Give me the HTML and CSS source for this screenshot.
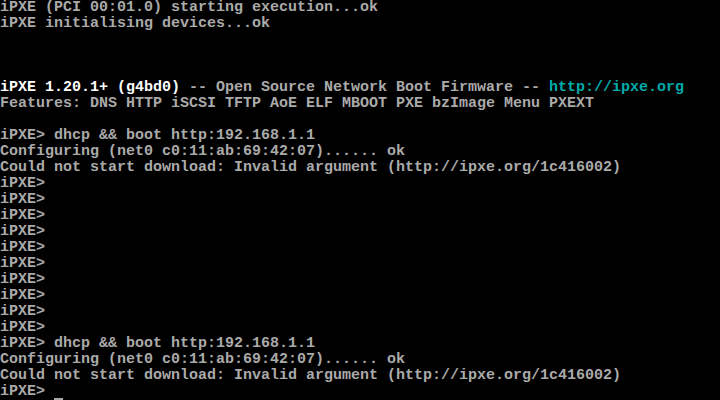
FILE: index.html
```html
<!DOCTYPE html>
<html>
<head>
<meta charset="utf-8">
<link rel="stylesheet" href="styles.css">
</head>
<body>
<pre class="console">iPXE (PCI 00:01.0) starting execution...ok
iPXE initialising devices...ok



<span class="hi">iPXE 1.20.1+ (g4bd0)</span> -- Open Source Network Boot Firmware -- <span class="url">http://ipxe.org</span>
Features: DNS HTTP iSCSI TFTP AoE ELF MBOOT PXE bzImage Menu PXEXT

iPXE&gt; dhcp &amp;&amp; boot http:192.168.1.1
Configuring (net0 c0:11:ab:69:42:07)...... ok
Could not start download: Invalid argument (http://ipxe.org/1c416002)
iPXE&gt;
iPXE&gt;
iPXE&gt;
iPXE&gt;
iPXE&gt;
iPXE&gt;
iPXE&gt;
iPXE&gt;
iPXE&gt;
iPXE&gt;
iPXE&gt; dhcp &amp;&amp; boot http:192.168.1.1
Configuring (net0 c0:11:ab:69:42:07)...... ok
Could not start download: Invalid argument (http://ipxe.org/1c416002)
iPXE&gt; <span class="cursor"> </span></pre>
</body>
</html>
```
FILE: styles.css
```css
html, body {
  margin: 0;
  padding: 0;
  background: #000;
  width: 720px;
  height: 400px;
  overflow: hidden;
}
.console {
  margin: 0;
  padding: 0;
  font-family: "Liberation Mono", "DejaVu Sans Mono", monospace;
  font-size: 15px;
  font-weight: bold;
  line-height: 16px;
  color: #aaaaaa;
  white-space: pre;
}
.hi {
  color: #ffffff;
}
.url {
  color: #00aaaa;
}
.cursor {
  display: inline-block;
  width: 9px;
  height: 16px;
  vertical-align: top;
  box-shadow: inset 0 -2px 0 0 #aaaaaa;
}
```
